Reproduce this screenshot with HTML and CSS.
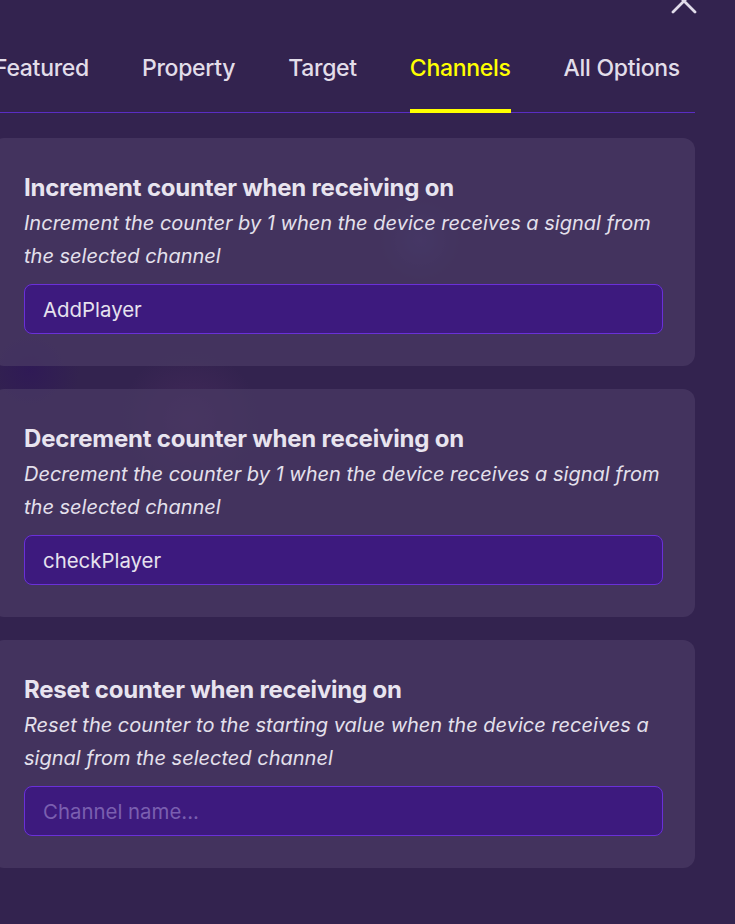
FILE: index.html
```html
<!DOCTYPE html>
<html lang="en">

<head>
    <meta charset="UTF-8">
    <meta name="viewport" content="width=device-width, initial-scale=1.0">
    <title>Counter - Channels</title>
    <link rel="stylesheet" href="styles.css">
</head>

<body>

    <div class="panel">
        <!-- Tombol tutup -->
        <div class="top">
            <svg class="close" width="26" height="26" viewBox="0 0 26 26">
                <path d="M2 2 L24 24 M24 2 L2 24" stroke="#e1dcea" stroke-width="2.8" stroke-linecap="round" fill="none" />
            </svg>
        </div>

        <!-- Tab -->
        <div class="tabs">
            <div class="tab">Featured</div>
            <div class="tab">Property</div>
            <div class="tab">Target</div>
            <div class="tab active">Channels</div>
            <div class="tab">All Options</div>
        </div>

        <!-- Pengaturan channel -->
        <div class="card">
            <div class="card-title">Increment counter when receiving on</div>
            <div class="card-desc">Increment the counter by 1 when the device receives a signal from the selected channel</div>
            <input type="text" class="channel" value="AddPlayer" placeholder="Channel name...">
        </div>

        <div class="card">
            <div class="card-title">Decrement counter when receiving on</div>
            <div class="card-desc">Decrement the counter by 1 when the device receives a signal from the selected channel</div>
            <input type="text" class="channel" value="checkPlayer" placeholder="Channel name...">
        </div>

        <div class="card">
            <div class="card-title">Reset counter when receiving on</div>
            <div class="card-desc">Reset the counter to the starting value when the device receives a signal from the selected channel</div>
            <input type="text" class="channel" placeholder="Channel name...">
        </div>
    </div>

</body>

</html>
```

FILE: styles.css
```css
body {
    margin: 0;
    font-family: Inter, "Noto Sans", sans-serif;
    color: #e6e2ee;
    background-color: #33234f;
    background-image:
        radial-gradient(circle at 420px 240px, rgba(70, 70, 150, 0.35), transparent 40px),
        radial-gradient(circle at 30px 370px, rgba(45, 20, 90, 0.6), transparent 50px),
        radial-gradient(circle at 190px 420px, rgba(110, 60, 120, 0.25), transparent 70px);
    height: 924px;
    overflow: hidden;
}

.panel {
    margin-left: -8px;
    width: 703px;
}

.top {
    height: 55px;
    display: flex;
    justify-content: flex-end;
    align-items: flex-start;
}

.close {
    margin-top: -12px;
    margin-right: -2px;
}

.tabs {
    display: flex;
    gap: 53px;
    padding-left: 2px;
    border-bottom: 1px solid #5a2dc4;
}

.tab {
    flex-shrink: 0;
    white-space: nowrap;
    font-size: 23px;
    font-weight: 500;
    line-height: 26px;
    letter-spacing: -0.3px;
    color: #e2dde9;
    padding-bottom: 28px;
    border-bottom: 4px solid transparent;
    margin-bottom: -1px;
}

.tab.active {
    color: #ffff00;
    border-bottom-color: #ffff00;
}

.card {
    margin-top: 25px;
    background: rgba(74, 58, 100, 0.72);
    border-radius: 12px;
    padding: 35px 32px 32px;
}

.card + .card {
    margin-top: 23px;
}

.card-title {
    font-size: 24px;
    font-weight: 700;
    line-height: 30px;
    letter-spacing: -0.2px;
    color: #e8e4ef;
    margin-bottom: 4px;
}

.card-desc {
    font-size: 20px;
    font-style: italic;
    line-height: 33px;
    color: #e4e0ec;
    margin-bottom: 11px;
}

.channel {
    display: block;
    box-sizing: border-box;
    width: 100%;
    height: 50px;
    padding: 0 18px;
    font-family: Inter, "Noto Sans", sans-serif;
    font-size: 20.4px;
    color: #e6e2ee;
    background: #3d1a7e;
    border: 1px solid #6a30d8;
    border-radius: 8px;
    outline: none;
}

.channel::placeholder {
    color: #7a5fb0;
}
```
